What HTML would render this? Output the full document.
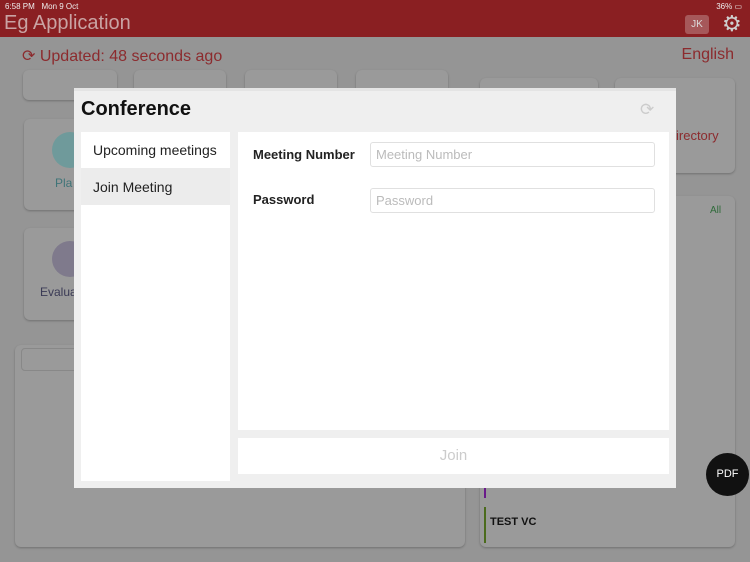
<html><head><style>
body{margin:0;width:750px;height:562px;background:#959595;font-family:"Liberation Sans",sans-serif;position:relative;overflow:hidden}
.a{position:absolute}
.card{position:absolute;background:#9a9a9a;border-radius:6px;box-shadow:0 1px 2px rgba(0,0,0,.25)}
.inp{position:absolute;left:370px;width:283px;height:23px;border:1px solid #e0e0e0;border-radius:3px;background:#fff;color:#bbb;font-size:13px;line-height:23px;padding-left:5px;box-sizing:border-box;width:285px;height:25px}
</style></head><body>
<div class="a" style="left:0;top:0;width:750px;height:37px;background:#8a1f22"></div>
<div class="a" style="left:5px;top:2px;font-size:8px;color:#eee">6:58 PM&nbsp;&nbsp; Mon 9 Oct</div>
<div class="a" style="right:8px;top:2px;font-size:8px;color:#eee">36% ▭</div>
<div class="a" style="left:4px;top:12px;font-size:20px;color:#c9a3a3">Eg Application</div>
<div class="a" style="left:685px;top:15px;width:24px;height:19px;background:#a6585a;border-radius:3px;color:#ddd;font-size:10px;text-align:center;line-height:19px">JK</div>
<div class="a" style="left:722px;top:11px;font-size:22px;color:#cfcfcf">⚙</div>
<div class="a" style="left:22px;top:46px;font-size:16px;color:#8c2b2e">⟳ Updated: 48 seconds ago</div>
<div class="a" style="right:16px;top:46px;font-size:16px;color:#8c2b2e">English</div>
<div class="card" style="left:23px;top:70px;width:94px;height:30px"></div>
<div class="card" style="left:134px;top:70px;width:92px;height:30px"></div>
<div class="card" style="left:245px;top:70px;width:92px;height:30px"></div>
<div class="card" style="left:356px;top:70px;width:92px;height:30px"></div>
<div class="card" style="left:480px;top:78px;width:118px;height:30px"></div>
<div class="card" style="left:615px;top:78px;width:120px;height:95px"></div>
<div class="a" style="left:676px;top:128px;font-size:13px;color:#8c2b2e">irectory</div>
<div class="card" style="left:24px;top:119px;width:80px;height:91px"></div>
<div class="a" style="left:52px;top:132px;width:36px;height:36px;border-radius:50%;background:#6f9a9b"></div>
<div class="a" style="left:55px;top:176px;font-size:12px;color:#3f7478">Pla</div>
<div class="card" style="left:24px;top:228px;width:80px;height:92px"></div>
<div class="a" style="left:52px;top:241px;width:36px;height:36px;border-radius:50%;background:#7f7a8c"></div>
<div class="a" style="left:40px;top:285px;font-size:12px;color:#3a3a55">Evalua</div>
<div class="card" style="left:15px;top:345px;width:450px;height:202px"></div>
<div class="a" style="left:21px;top:348px;width:80px;height:21px;border:1px solid #888;border-radius:4px"></div>
<div class="card" style="left:480px;top:196px;width:255px;height:351px"></div>
<div class="a" style="left:710px;top:205px;font-size:10px;color:#2f6b3a">All</div>
<div class="a" style="left:484px;top:480px;width:2px;height:18px;background:#6a1a8a"></div>
<div class="a" style="left:484px;top:507px;width:2px;height:36px;background:#4b6b1c"></div>
<div class="a" style="left:490px;top:516px;font-size:11px;font-weight:bold;color:#111">TEST VC</div>
<div class="a" style="left:74px;top:88px;width:602px;height:400px;background:#efefef;border-top:3px solid #e4e4e4;box-sizing:border-box"></div>
<div class="a" style="left:81px;top:98px;font-size:20px;font-weight:bold;color:#111">Conference</div>
<div class="a" style="left:640px;top:100px;font-size:17px;color:#ccc">⟳</div>
<div class="a" style="left:81px;top:132px;width:149px;height:349px;background:#fff"></div>
<div class="a" style="left:81px;top:168px;width:149px;height:37px;background:#ececec"></div>
<div class="a" style="left:93px;top:142px;font-size:14px;color:#222">Upcoming meetings</div>
<div class="a" style="left:93px;top:179px;font-size:14px;color:#222">Join Meeting</div>
<div class="a" style="left:238px;top:132px;width:431px;height:298px;background:#fff"></div>
<div class="a" style="left:253px;top:147px;font-size:13px;font-weight:bold;color:#222">Meeting Number</div>
<div class="a" style="left:253px;top:192px;font-size:13px;font-weight:bold;color:#222">Password</div>
<div class="inp" style="top:142px">Meeting Number</div>
<div class="inp" style="top:188px">Password</div>
<div class="a" style="left:238px;top:438px;width:431px;height:36px;background:#fff;text-align:center;line-height:36px;font-size:15px;color:#ccc">Join</div>
<div class="a" style="left:706px;top:453px;width:43px;height:43px;border-radius:50%;background:#111;color:#fff;font-size:11px;text-align:center;line-height:43px">PDF</div>
</body></html>
